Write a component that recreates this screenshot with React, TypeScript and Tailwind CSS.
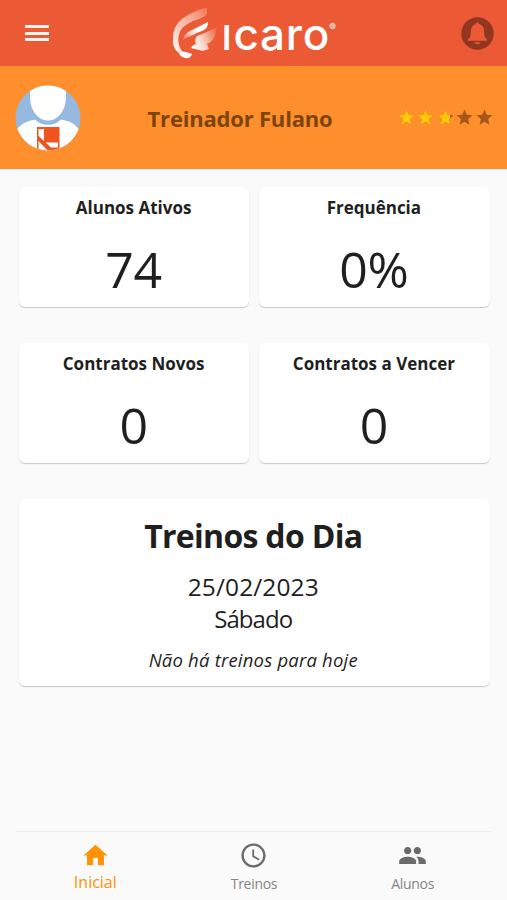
import { MdAccessTime, MdHome, MdPeople, MdStar } from 'react-icons/md';
import clsx from 'clsx';

const stats = [
  { label: 'Alunos Ativos', value: '74' },
  { label: 'Frequência', value: '0%' },
  { label: 'Contratos Novos', value: '0' },
  { label: 'Contratos a Vencer', value: '0' },
];

const tabs = [
  { label: 'Inicial', icon: MdHome, active: true },
  { label: 'Treinos', icon: MdAccessTime, active: false },
  { label: 'Alunos', icon: MdPeople, active: false },
];

const rating = 2.75;

function LogoMark() {
  return (
    <svg width="46" height="52" viewBox="0 0 46 52" aria-hidden="true">
      <defs>
        <linearGradient id="swoosh" x1="0" y1="1" x2="1" y2="0">
          <stop offset="0" stopColor="#fff" />
          <stop offset="0.35" stopColor="#fbcabb" />
          <stop offset="0.7" stopColor="#f6a78f" />
          <stop offset="1" stopColor="#f07a58" />
        </linearGradient>
        <linearGradient id="feather" x1="0" y1="1" x2="1" y2="0">
          <stop offset="0" stopColor="#ef7653" />
          <stop offset="0.55" stopColor="#fff" />
          <stop offset="1" stopColor="#fff" />
        </linearGradient>
        <linearGradient id="wing" x1="0" y1="0.6" x2="1" y2="0.2">
          <stop offset="0" stopColor="#fff" />
          <stop offset="0.4" stopColor="#fbd0c3" />
          <stop offset="1" stopColor="#ee6a47" />
        </linearGradient>
      </defs>
      <path d="M34 0C26 1 18 5 12 9C5 13 1 19 0 28C-1 36 1 42 6 45L11 46C5 39 4 31 7 24C9 19 14 16 20 13C26 11 33 9 34 5Z" fill="url(#swoosh)" />
      <path d="M35 14L19 22C14 24 11 27 10 32C14 29 19 28 24 25L31 22C34 20 35 18 35 14Z" fill="url(#feather)" />
      <path d="M44 19L34 24L24 28C22 30 22 34 23 36C20 37 19 38 18 40L30 43L36 41L34 36C41 33 43 27 44 19Z" fill="url(#wing)" />
      <path d="M6 45C9 42 13 44 19 46C18 49 16 51 12 50C9 49 7 48 6 45Z" fill="#fff" />
    </svg>
  );
}

function BellIcon() {
  return (
    <svg width="33" height="33" viewBox="0 0 33 33" aria-hidden="true">
      <circle cx="16.5" cy="16.5" r="16.2" fill="#93361f" />
      <path d="M16.500 5.500c.9 0 1.500.6 1.600 1.500 3.400 1.100 5 3.900 5 7.200 0 4.600.8 6.400 3 8.200v1.400H6.900v-1.400c2.200-1.800 3-3.600 3-8.200 0-3.300 1.600-6.100 5-7.200.1-.9.7-1.500 1.600-1.500zM13.300 25.200h6.400c-.6 1.400-1.700 1.800-3.200 1.800s-2.600-.4-3.200-1.800z" fill="#eb5935" />
    </svg>
  );
}

function Avatar() {
  return (
    <svg width="66" height="66" viewBox="0 0 66 66" aria-hidden="true">
      <clipPath id="avatar">
        <circle cx="33" cy="33" r="32.5" />
      </clipPath>
      <g clipPath="url(#avatar)">
        <rect width="66" height="66" fill="#96b9e0" />
        <path d="M0 66V47C5 39 12 36 20 34.500C26 41.500 40 41.500 46 34.500C55 36 61 39 66 47V66Z" fill="#fff" />
        <path d="M15 0H51V12C51 25 43 35.500 33 35.500C23 35.500 15 25 15 12Z" fill="#fff" />
        <path d="M22 42H44.500V66H22Z" fill="#ee541e" />
        <path d="M23.500 44H29V56L23.500 51ZM30.500 57.500H43V62.500H36ZM23.500 56L33 66H23.500Z" fill="#fff" />
      </g>
    </svg>
  );
}

function Stars() {
  return (
    <div className="flex gap-[0.5px]">
      {[0, 1, 2, 3, 4].map(i => {
        const fill = Math.min(1, Math.max(0, rating - i));
        return (
          <div key={i} className="relative size-[19px]">
            <MdStar size={19} className="text-[#a5571b]" />
            <div className="absolute inset-y-0 left-0 overflow-hidden" style={{ width: `${fill * 100}%` }}>
              <MdStar size={19} className="text-[#ffc60a]" />
            </div>
          </div>
        );
      })}
    </div>
  );
}

export default function App() {
  return (
    <div className="flex h-[900px] w-full flex-col bg-[#fafafa] font-['Open_Sans','Noto_Sans',sans-serif] text-[#1f1f1f]">
      {/* Top bar */}
      <header className="flex h-[66px] items-center bg-[#eb5935] pl-[25px] pr-[13.500px]">
        <button aria-label="Menu" className="flex w-6 flex-col gap-[3.500px]">
          <span className="h-[3px] bg-[#fff1ec]" />
          <span className="h-[3px] bg-[#fff1ec]" />
          <span className="h-[3px] bg-[#fff1ec]" />
        </button>
        <div className="mr-auto ml-[124px] flex items-center pt-[2px]">
          <LogoMark />
          <div className="ml-[3px] flex items-baseline pb-px font-['Inter',sans-serif] leading-none font-medium text-white">
            <span className="mr-[2px] text-[34px] font-semibold">I</span>
            <span className="text-[44px] tracking-[0.8px]">caro</span>
            <span className="relative -top-[19px] -ml-px text-[10px] font-normal">®</span>
          </div>
        </div>
        <BellIcon />
      </header>

      {/* Trainer */}
      <section className="flex h-[103px] items-center justify-between bg-[#ff8f2c] pl-[15px] pr-[13px]">
        <Avatar />
        <h1 className="pt-[2px] pl-[2px] text-[22px] font-bold tracking-[-0.2px] text-[#7d440f]">Treinador Fulano</h1>
        <Stars />
      </section>

      <main className="flex-1 pt-[18px] pr-[17.500px] pl-[19px]">
        <div className="grid grid-cols-2 gap-x-[10px] gap-y-9">
          {stats.map(stat => (
            <div key={stat.label} className="flex h-[120px] flex-col items-center rounded-md bg-white pt-2 pr-px shadow-[0_1px_1px_rgba(0,0,0,0.2)]">
              <p className="text-[17px] leading-[26px] font-bold">{stat.label}</p>
              <p className="mt-[14px] text-[50px] leading-[68px] tracking-[-0.3px]">{stat.value}</p>
            </div>
          ))}
        </div>

        <div className="mt-9 flex h-[187px] flex-col items-center rounded-md bg-white pt-[14px] pr-[2px] shadow-[0_1px_1px_rgba(0,0,0,0.2)]">
          <h2 className="text-[32px] leading-[46px] font-bold tracking-[-0.7px]">Treinos do Dia</h2>
          <p className="mt-[12px] text-[24.500px] leading-8 tracking-[0.1px]">25/02/2023</p>
          <p className="text-[24px] leading-8 tracking-[-0.9px]">Sábado</p>
          <p className="mt-[13px] text-[18.500px] leading-6 tracking-[0.2px] italic">Não há treinos para hoje</p>
        </div>
      </main>

      {/* Bottom navigation */}
      <nav className="mr-[15px] ml-4 grid h-[69.500px] grid-cols-3 border-t border-[#eeeeee]">
        {tabs.map(tab => (
          <a key={tab.label} className={clsx('flex flex-col items-center pt-[9px]', tab.active ? 'text-[#ff9207]' : 'text-[#6b6b6b]')}>
            <tab.icon size={29} />
            <span className={clsx('leading-6', tab.active ? 'text-[16px]' : 'pt-[2px] text-[14px] tracking-[-0.3px] text-[#858585]')}>{tab.label}</span>
          </a>
        ))}
      </nav>
    </div>
  );
}
